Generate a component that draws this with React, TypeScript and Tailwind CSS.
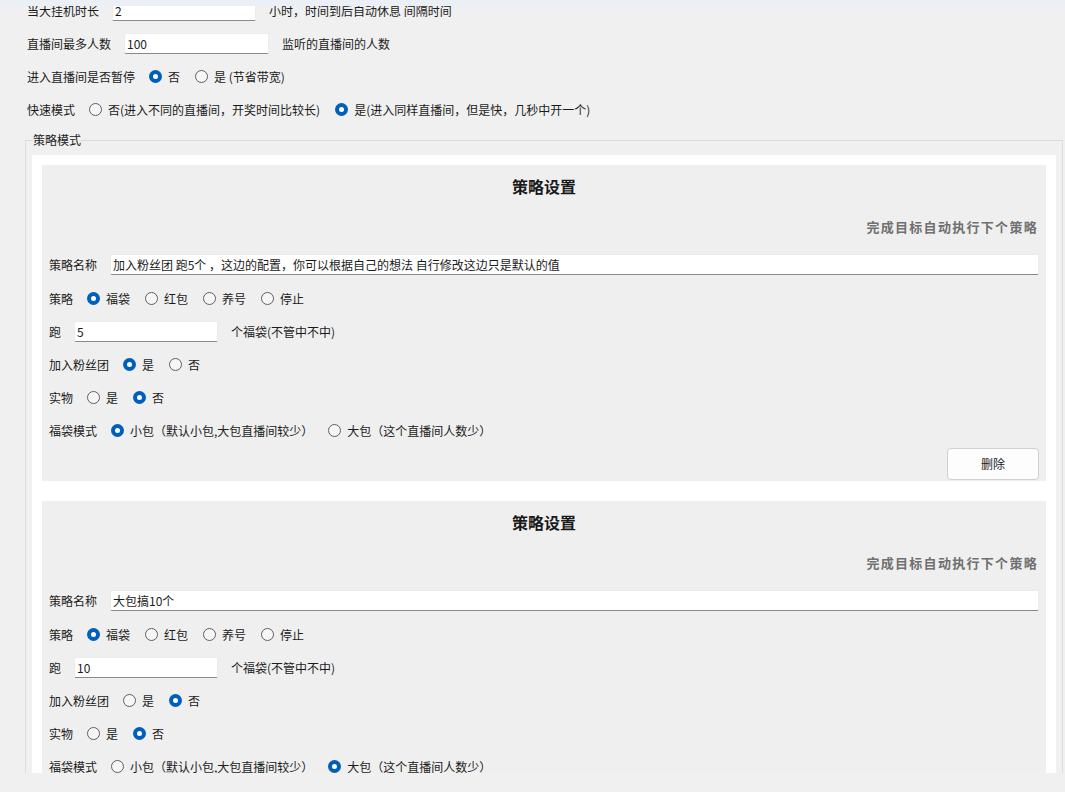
import React from "react";

type RadioProps = { checked?: boolean; label: string };

const Radio = ({ checked, label }: RadioProps) => (
    <span className="flex items-center gap-[6px]">
        {checked ? (
            <span className="flex h-[13px] w-[13px] items-center justify-center rounded-full bg-[#005fb8]">
                <span className="h-[5px] w-[5px] rounded-full bg-white" />
            </span>
        ) : (
            <span className="h-[13px] w-[13px] rounded-full border border-[#5f5f5f] bg-[#f6f6f6]" />
        )}
        <span>{label}</span>
    </span>
);

const RadioRow = ({ label, options, value }: { label: string; options: string[]; value: number }) => (
    <div className="flex h-[33px] items-center gap-[14px]">
        <span>{label}</span>
        <div className="flex items-center gap-[15px]">
            {options.map((o, i) => (
                <Radio key={o} label={o} checked={i === value} />
            ))}
        </div>
    </div>
);

const TextBox = ({ value, className }: { value: string; className: string }) => (
    <div
        className={
            "flex h-[21px] items-center rounded-[2px] border border-[#ebebeb] border-b-[#8a8a8a] bg-white px-[2px] " +
            className
        }
    >
        {value}
    </div>
);

type Strategy = {
    name: string;
    count: string;
    fans: number;
    real: number;
    mode: number;
};

const StrategyCard = ({ s }: { s: Strategy }) => (
    <div className="flex flex-col bg-[#efefef] pl-[7px] pr-[7px] pb-[1px]">
        <div className="flex h-[41px] items-center justify-center text-[16px] font-bold text-[#1a1a1a]">策略设置</div>
        <div className="flex h-[42px] items-center justify-end pr-[1px] text-[13px] font-bold tracking-[1.3px] text-[#707070]">
            完成目标自动执行下个策略
        </div>
        <div className="flex h-[33px] items-center gap-[13px]">
            <span>策略名称</span>
            <TextBox value={s.name} className="flex-1" />
        </div>
        <div className="flex flex-col pt-[1px]">
            <RadioRow label="策略" options={["福袋", "红包", "养号", "停止"]} value={0} />
            <div className="flex h-[33px] items-center gap-[13px]">
                <span>跑</span>
                <TextBox value={s.count} className="w-[144px]" />
                <span>个福袋(不管中不中)</span>
            </div>
            <RadioRow label="加入粉丝团" options={["是", "否"]} value={s.fans} />
            <RadioRow label="实物" options={["是", "否"]} value={s.real} />
            <RadioRow
                label="福袋模式"
                options={["小包（默认小包,大包直播间较少）", "大包（这个直播间人数少）"]}
                value={s.mode}
            />
        </div>
        <div className="mt-[1px] flex justify-end">
            <button className="h-[32px] w-[92px] rounded-[4px] border border-[#d0d0d0] bg-[#fdfdfd] text-[12px]">删除</button>
        </div>
    </div>
);

const strategies: Strategy[] = [
    {
        name: "加入粉丝团 跑5个 ，这边的配置，你可以根据自己的想法 自行修改这边只是默认的值",
        count: "5",
        fans: 0,
        real: 1,
        mode: 0,
    },
    {
        name: "大包搞10个",
        count: "10",
        fans: 1,
        real: 1,
        mode: 1,
    },
];

export default function App() {
    return (
        <div className="relative h-[792px] w-[1065px] overflow-hidden bg-[#f0f0f0] font-['Noto_Sans_CJK_SC','Microsoft_YaHei',sans-serif] text-[12px] text-[#1b1b1b]">
            <div className="h-[773px] overflow-hidden">
                <div className="mt-[-6px] flex flex-col pl-[27px]">
                    <div className="flex h-[33px] items-center gap-[13px]">
                        <span>当大挂机时长</span>
                        <TextBox value="2" className="w-[144px]" />
                        <span>小时，时间到后自动休息 间隔时间</span>
                    </div>
                    <div className="flex h-[33px] items-center gap-[13px]">
                        <span>直播间最多人数</span>
                        <TextBox value="100" className="w-[145px]" />
                        <span>监听的直播间的人数</span>
                    </div>
                    <RadioRow label="进入直播间是否暂停" options={["否", "是 (节省带宽)"]} value={0} />
                    <RadioRow
                        label="快速模式"
                        options={["否(进入不同的直播间，开奖时间比较长)", "是(进入同样直播间，但是快，几秒中开一个)"]}
                        value={1}
                    />
                </div>

                <div className="relative ml-[25px] mt-[14px] w-[1038px] border border-[#dcdcdc] pl-[6px] pr-[6px] pt-[14px]">
                    <span className="absolute left-[7px] top-[-9px] bg-[#f0f0f0] text-[12px] leading-[16px]">策略模式</span>
                    <div className="flex flex-col gap-[20px] bg-white p-[10px]">
                        {strategies.map((s, i) => (
                            <StrategyCard key={i} s={s} />
                        ))}
                    </div>
                </div>
            </div>
            <div className="absolute left-0 right-0 top-0 h-[6px] bg-[#ebf0f6]" />
        </div>
    );
}
